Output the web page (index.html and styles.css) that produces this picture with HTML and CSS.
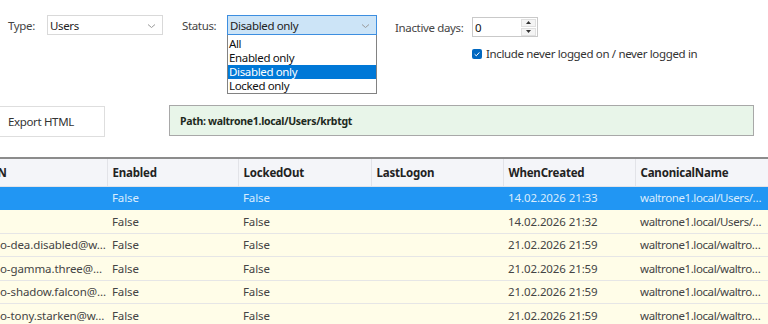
FILE: index.html
```html
<!DOCTYPE html>
<html lang="en">
<head>
<meta charset="utf-8">
<title>AD Users</title>
<link rel="stylesheet" href="styles.css">
</head>
<body>
<div class="app">
  <div class="filters">
    <div class="field">
      <span class="label label-type">Type:</span>
      <div class="combo combo-type">
        <span>Users</span>
        <svg class="chev" width="9" height="6" viewBox="0 0 9 6"><path d="M1 1.5 L4.5 4.5 L8 1.5" fill="none" stroke="#9a9a9a" stroke-width="1"/></svg>
      </div>
    </div>
    <div class="field">
      <span class="label label-status">Status:</span>
      <div class="combo-wrap">
        <div class="combo combo-status">
          <span>Disabled only</span>
          <svg class="chev" width="9" height="6" viewBox="0 0 9 6"><path d="M1 1.5 L4.5 4.5 L8 1.5" fill="none" stroke="#9a9a9a" stroke-width="1"/></svg>
        </div>
        <ul class="dropdown">
          <li>All</li>
          <li>Enabled only</li>
          <li class="sel">Disabled only</li>
          <li>Locked only</li>
        </ul>
      </div>
    </div>
    <div class="field-col">
      <div class="field">
        <span class="label label-inactive">Inactive days:</span>
        <div class="spinner">
          <span class="spin-val">0</span>
          <div class="spin-btns">
            <span class="spin-btn"><svg width="5" height="3" viewBox="0 0 5 3"><path d="M0 3 L2.5 0 L5 3Z" fill="#333"/></svg></span>
            <span class="spin-btn"><svg width="5" height="3" viewBox="0 0 5 3"><path d="M0 0 L2.5 3 L5 0Z" fill="#333"/></svg></span>
          </div>
        </div>
      </div>
      <div class="check">
        <span class="box"><svg width="10" height="10" viewBox="0 0 10 10"><path d="M2.6 5.2 L4.3 6.8 L7.4 3.4" fill="none" stroke="#fff" stroke-width="1"/></svg></span>
        <span>Include never logged on / never logged in</span>
      </div>
    </div>
  </div>

  <div class="actions">
    <button class="btn">Export HTML</button>
    <div class="path">Path: waltrone1.local/Users/krbtgt</div>
  </div>

  <div class="grid-wrap">
    <table class="grid">
      <colgroup>
        <col class="c1"><col class="c2"><col class="c3"><col class="c4"><col class="c5"><col class="c6">
      </colgroup>
      <thead>
        <tr><th>UPN</th><th>Enabled</th><th>LockedOut</th><th>LastLogon</th><th>WhenCreated</th><th>CanonicalName</th></tr>
      </thead>
      <tbody>
        <tr class="selected"><td class="upn"></td><td>False</td><td>False</td><td></td><td>14.02.2026 21:33</td><td class="cn">waltrone1.local/Users/…</td></tr>
        <tr><td class="upn"></td><td>False</td><td>False</td><td></td><td>14.02.2026 21:32</td><td class="cn">waltrone1.local/Users/…</td></tr>
        <tr><td class="upn">demo-dea.disabled@w…</td><td>False</td><td>False</td><td></td><td>21.02.2026 21:59</td><td class="cn">waltrone1.local/waltro…</td></tr>
        <tr><td class="upn">demo-gamma.three@…</td><td>False</td><td>False</td><td></td><td>21.02.2026 21:59</td><td class="cn">waltrone1.local/waltro…</td></tr>
        <tr><td class="upn">demo-shadow.falcon@…</td><td>False</td><td>False</td><td></td><td>21.02.2026 21:59</td><td class="cn">waltrone1.local/waltro…</td></tr>
        <tr><td class="upn">demo-tony.starken@w…</td><td>False</td><td>False</td><td></td><td>21.02.2026 21:59</td><td class="cn">waltrone1.local/waltro…</td></tr>
      </tbody>
    </table>
  </div>
</div>
</body>
</html>
```

FILE: styles.css
```css
* { box-sizing: border-box; }
html, body {
  margin: 0;
  padding: 0;
  background: #ffffff;
  overflow: hidden;
  width: 768px;
  height: 324px;
}
body {
  font-family: "Noto Sans", "Open Sans", sans-serif;
  font-size: 11.5px;
  letter-spacing: -0.35px;
  color: #333333;
}
.app { width: 768px; }

.filters {
  height: 105px;
  display: flex;
  align-items: flex-start;
  padding: 15px 0 0 8px;
}
.field {
  display: flex;
  align-items: center;
}
.label { color: #444; }
.label-type { width: 39px; }
.label-status { width: 45px; margin-left: 19px; }
.label-inactive { width: 77px; margin-left: 18px; }

.combo {
  height: 20px;
  border: 1px solid #d9d9d9;
  background: #fff;
  display: flex;
  align-items: center;
  justify-content: space-between;
  padding: 0 6px 0 2px;
  color: #222;
}
.combo-type { width: 116px; }
.combo-wrap { position: relative; }
.combo-status {
  width: 150px;
  background: #cce4f7;
  border-color: #3d8ee0;
}
.chev { margin-top: 1px; }
.dropdown {
  position: absolute;
  top: 20px;
  left: 0;
  width: 150px;
  margin: 0;
  padding: 2px 0 0 0;
  list-style: none;
  background: #fff;
  border: 1px solid #828282;
  border-top: none;
  z-index: 5;
  color: #111;
}
.dropdown li {
  height: 14px;
  line-height: 14px;
  padding-left: 1px;
}
.dropdown li.sel {
  background: #0078d7;
  color: #fff;
}

.field-col {
  display: flex;
  flex-direction: column;
  padding-top: 2px;
}
.spinner {
  width: 66px;
  height: 20px;
  border: 1px solid #c9c9c9;
  display: flex;
  align-items: center;
  justify-content: space-between;
  background: #fff;
}
.spin-val { padding-left: 2px; color: #111; }
.spin-btns {
  display: flex;
  flex-direction: column;
  gap: 1px;
  margin-right: 1px;
}
.spin-btn {
  width: 15px;
  height: 8px;
  border: 1px solid #e0e0e0;
  background: #f4f4f4;
  display: flex;
  align-items: center;
  justify-content: center;
}
.check {
  display: flex;
  align-items: center;
  margin-left: 95px;
  margin-top: 9px;
  color: #333;
}
.check .box {
  width: 10px;
  height: 10px;
  border-radius: 2px;
  background: #0067c0;
  display: inline-flex;
  margin-right: 4px;
}

.actions {
  display: flex;
  align-items: flex-start;
  height: 52px;
}
.btn {
  font: inherit;
  letter-spacing: inherit;
  color: #333;
  margin-left: -12px;
  width: 117px;
  height: 31px;
  margin-top: 1px;
  background: #fff;
  border: 1px solid #dedede;
  text-align: left;
  padding: 0 0 0 19px;
}
.path {
  margin-left: 64px;
  width: 585px;
  height: 31px;
  border: 1px solid #a8a8a8;
  background: #e8f5e9;
  font-weight: bold;
  font-size: 10.5px;
  letter-spacing: -0.3px;
  color: #1d2a1d;
  display: flex;
  align-items: center;
  padding-left: 10px;
}

.grid-wrap {
  margin-left: -23px;
  width: 791px;
}
.grid {
  border-collapse: collapse;
  table-layout: fixed;
  width: 791px;
  border-top: 2px solid #8c8c8c;
}
.c1 { width: 130px; }
.c2 { width: 131px; }
.c3 { width: 133px; }
.c4 { width: 132px; }
.c5 { width: 132px; }
.c6 { width: 133px; }
.grid th {
  background: #f4f5f9;
  height: 28px;
  text-align: left;
  font-weight: bold;
  letter-spacing: -0.2px;
  color: #222;
  padding: 0 0 0 5px;
  border-left: 1px solid #e2e3e8;
  border-bottom: 1px solid #e2e3e8;
  white-space: nowrap;
  overflow: hidden;
}
.grid th:first-child { border-left: none; }
.grid td {
  height: 23.5px;
  padding: 0 0 0 5px;
  background: #fffde8;
  color: #444;
  letter-spacing: -0.1px;
  border-bottom: 1px solid #e6e6e6;
  white-space: nowrap;
  overflow: hidden;
}
.grid td.upn { text-indent: -6px; }
.grid td.cn { letter-spacing: -0.4px; }
.grid tr.selected td {
  background: #2196f3;
  color: #d9ecfd;
  border-bottom-color: #2196f3;
}
```
